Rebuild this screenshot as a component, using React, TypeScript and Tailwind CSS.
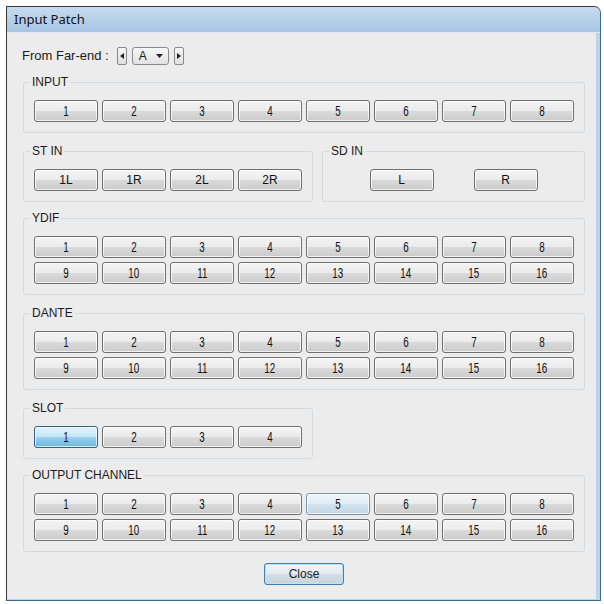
import React from "react";

const UI = "font-['Liberation_Sans',Arial,sans-serif]";

const btnBase =
  "h-[22px] rounded-[3px] border text-[12px] leading-none text-[#111] flex items-center justify-center shadow-[inset_0_0_0_1px_rgba(255,255,255,0.75)]";
const btnNormal =
  "border-[#6f6f6f] bg-[linear-gradient(#f4f4f4_0%,#ebebeb_48%,#dadada_52%,#cbcbcb_100%)]";
const btnChecked =
  "border-[#2c628b] bg-[linear-gradient(#e5f4fc_0%,#c4e5f6_48%,#98d1ef_52%,#6cb5dd_100%)]";
const btnHot =
  "border-[#7a93a8] bg-[linear-gradient(#f0f5f9_0%,#e2ecf3_48%,#d3e2ec_52%,#c4d7e5_100%)]";

function ChButton({ label, state = "normal", w = "w-[64px]" }: { label: string; state?: "normal" | "checked" | "hot"; w?: string }) {
  const numeric = /^\d+$/.test(label);
  const look = state === "checked" ? btnChecked : state === "hot" ? btnHot : btnNormal;
  return (
    <button type="button" className={`${btnBase} ${look} ${w}`}>
      {numeric ? (
        <span className="inline-block scale-x-[0.7] text-[14px] leading-none">{label}</span>
      ) : (
        <span>{label}</span>
      )}
    </button>
  );
}

function Group({ title, width, className = "", children }: { title: string; width: string; className?: string; children: React.ReactNode }) {
  return (
    <fieldset className={`${width} ${className} rounded-[3px] border border-[#d3d9dd] px-[10px] pt-[11px] pb-[10px]`}>
      <legend className="ml-[-4px] px-[2px] text-[12px] leading-[14px] text-[#1b1b1b]">{title}</legend>
      {children}
    </fieldset>
  );
}

function Grid({ labels, hot = -1, checked = -1 }: { labels: string[]; hot?: number; checked?: number }) {
  return (
    <div className="grid grid-cols-8 gap-[4px]">
      {labels.map((l, i) => (
        <ChButton key={l} label={l} state={i === checked ? "checked" : i === hot ? "hot" : "normal"} />
      ))}
    </div>
  );
}

const n8 = Array.from({ length: 8 }, (_, i) => String(i + 1));
const n16 = Array.from({ length: 16 }, (_, i) => String(i + 1));

export default function App() {
  return (
    <div className={`w-[604px] h-[604px] bg-white pl-[6px] pt-[6px] ${UI}`}>
      <div className="w-[595px] h-[595px] flex flex-col rounded-tr-[7px] overflow-hidden border-l border-t border-r border-b border-l-[#3a3a3a] border-t-[#3a3a3a] border-r-[#3d6e85] border-b-[#3d6e85] bg-[#bcd4e9]">
        {/* title bar */}
        <div className="h-[26px] shrink-0 flex items-center pl-[7px] bg-[linear-gradient(#c6daee,#a6c5e2)] border-b border-[#dbe7f2]">
          <span className="font-['Noto_Sans','Open_Sans',sans-serif] text-[13px] text-[#111]">Input Patch</span>
        </div>
        <div className="flex flex-1 min-h-0">
          <div className="flex-1 bg-[#ececec] pl-[15px] mb-[1px]">
            {/* From Far-end */}
            <div className="mt-[14px] flex items-center h-[18px]">
              <span className="text-[13px] text-[#1b1b1b] mr-[8px]">From Far-end :</span>
              <button type="button" className="w-[10px] h-[18px] rounded-[2px] border border-[#8a8a8a] bg-[linear-gradient(#f6f6f6,#dedede)] flex items-center justify-center">
                <svg width="4" height="6" viewBox="0 0 4 6"><path d="M4 0 L0 3 L4 6 Z" fill="#222" /></svg>
              </button>
              <div className="ml-[5px] w-[37px] h-[18px] rounded-[3px] border border-[#8a8a8a] bg-[linear-gradient(#f7f7f7,#e2e2e2)] flex items-center pl-[6px] pr-[5px]">
                <span className="text-[12px] leading-none text-[#1b1b1b]">A</span>
                <svg className="ml-auto" width="7" height="4" viewBox="0 0 7 4"><path d="M0 0 H7 L3.5 4 Z" fill="#222" /></svg>
              </div>
              <button type="button" className="ml-[5px] w-[10px] h-[18px] rounded-[2px] border border-[#8a8a8a] bg-[linear-gradient(#f6f6f6,#dedede)] flex items-center justify-center">
                <svg width="4" height="6" viewBox="0 0 4 6"><path d="M0 0 L4 3 L0 6 Z" fill="#222" /></svg>
              </button>
            </div>

            <div className="pl-[1px]">
              <Group title="INPUT" width="w-[562px]" className="mt-[10px]">
                <Grid labels={n8} />
              </Group>

              <div className="mt-[11px] flex gap-[9px]">
                <Group title="ST IN" width="w-[290px]">
                  <div className="flex gap-[4px]">
                    {["1L", "1R", "2L", "2R"].map((l) => (
                      <ChButton key={l} label={l} />
                    ))}
                  </div>
                </Group>
                <Group title="SD IN" width="w-[263px]">
                  <div className="flex justify-center gap-[40px]">
                    <ChButton label="L" />
                    <ChButton label="R" />
                  </div>
                </Group>
              </div>

              <Group title="YDIF" width="w-[562px]" className="mt-[9px]">
                <Grid labels={n16} />
              </Group>

              <Group title="DANTE" width="w-[562px]" className="mt-[11px]">
                <Grid labels={n16} />
              </Group>

              <Group title="SLOT" width="w-[290px]" className="mt-[11px]">
                <div className="flex gap-[4px]">
                  {["1", "2", "3", "4"].map((l, i) => (
                    <ChButton key={l} label={l} state={i === 0 ? "checked" : "normal"} />
                  ))}
                </div>
              </Group>

              <Group title="OUTPUT CHANNEL" width="w-[562px]" className="mt-[9px]">
                <Grid labels={n16} hot={4} />
              </Group>

              <div className="w-[562px] flex justify-center mt-[11px]">
                <button
                  type="button"
                  className="w-[80px] h-[22px] rounded-[3px] border border-[#3c7fb1] text-[12px] text-[#1b1b1b] bg-[linear-gradient(#f1f4f7_0%,#e4eaef_48%,#d4dde4_52%,#c8d3dc_100%)] shadow-[inset_0_0_0_1px_#bfe1f4]"
                >
                  Close
                </button>
              </div>
            </div>
          </div>
          {/* right frame */}
          <div className="w-[4px] shrink-0 bg-[#bcd4e9]" />
        </div>
      </div>
    </div>
  );
}
